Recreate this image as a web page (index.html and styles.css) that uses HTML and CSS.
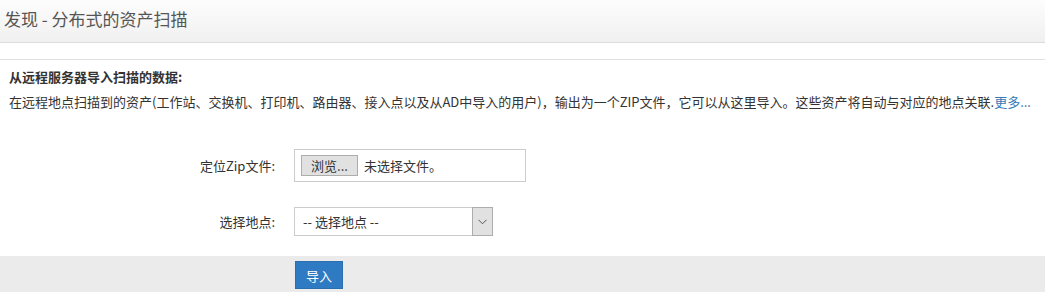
FILE: index.html
```html
<!DOCTYPE html>
<html>
<head>
  <meta charset="UTF-8">
  <meta name="viewport" content="width=device-width, initial-scale=1">
  <title>发现 - 分布式的资产扫描</title>
  <link rel="stylesheet" href="styles.css">
</head>
<body>
<div class="page-header">
  <h1>发现 - 分布式的资产扫描</h1>
</div>

<form id="import-form" action="/discovery/import" method="POST" enctype="multipart/form-data">
  <div class="intro">
    <h2>从远程服务器导入扫描的数据:</h2>
    <p>在远程地点扫描到的资产(工作站、交换机、打印机、路由器、接入点以及从AD中导入的用户)，输出为一个ZIP文件，它可以从这里导入。这些资产将自动与对应的地点关联.<a href="#">更多...</a></p>
  </div>

  <div class="form-row row-file">
    <label class="row-label" for="zip-file">定位Zip文件:</label>
    <label class="file-pick">
      <span class="file-btn">浏览...</span>
      <span class="file-name" id="file-name">未选择文件。</span>
      <input type="file" id="zip-file" name="zip-file" accept=".zip" onchange="showFileName(event)">
    </label>
  </div>

  <div class="form-row row-site">
    <label class="row-label" for="site">选择地点:</label>
    <div class="select-box">
      <select id="site" name="site">
        <option value="">-- 选择地点 --</option>
        <option value="hq">总部</option>
        <option value="branch">分公司</option>
      </select>
      <span class="select-arrow">
        <svg width="9" height="6" viewBox="0 0 9 6"><path d="M0.5 0.8 L4.5 4.8 L8.5 0.8" fill="none" stroke="#555" stroke-width="1"/></svg>
      </span>
    </div>
  </div>

  <div class="form-actions">
    <button type="submit">导入</button>
  </div>
</form>

<script>
  function showFileName(event) {
    const file = event.target.files[0];
    document.getElementById('file-name').textContent = file ? file.name : '未选择文件。';
  }
</script>
</body>
</html>
```

FILE: styles.css
```css
body {
  margin: 0;
  font-family: "Noto Sans CJK SC", "Noto Sans", sans-serif;
  font-size: 13px;
  color: #333;
  background: #fff;
}

.page-header {
  height: 42px;
  background: linear-gradient(to bottom, #fdfdfd, #f0f0f0);
  border-bottom: 1px solid #dcdcdc;
  margin-bottom: 16px;
}

.page-header h1 {
  margin: 0;
  padding-left: 4px;
  font-size: 17px;
  font-weight: normal;
  line-height: 38px;
  color: #555;
}

.intro {
  border-top: 1px solid #e0e0e0;
  padding: 7px 9px 0;
}

.intro h2 {
  margin: 0 0 5px;
  font-size: 13px;
  font-weight: bold;
  line-height: 20px;
}

.intro p {
  margin: 0;
  line-height: 20px;
  white-space: nowrap;
}

.intro a {
  color: #337ab7;
  text-decoration: none;
}

.form-row {
  display: grid;
  grid-template-columns: 275px auto;
  column-gap: 19px;
  align-items: center;
}

.row-file {
  margin-top: 37px;
}

.row-site {
  margin-top: 25px;
}

.row-label {
  text-align: right;
}

.file-pick {
  display: flex;
  align-items: center;
  width: 224px;
  height: 31px;
  border: 1px solid #ccc;
  padding-left: 6px;
  box-sizing: content-box;
  cursor: pointer;
}

.file-pick input {
  display: none;
}

.file-btn {
  display: inline-block;
  width: 55px;
  height: 19px;
  line-height: 19px;
  text-align: center;
  background: #e1e1e1;
  border: 1px solid #adadad;
}

.file-name {
  margin-left: 6px;
}

.select-box {
  display: flex;
  width: 197px;
  height: 27px;
  border: 1px solid #ccc;
}

.select-box select {
  flex: 1;
  appearance: none;
  -webkit-appearance: none;
  border: none;
  background: #fff;
  padding: 0 0 0 8px;
  font-family: inherit;
  font-size: 13px;
  color: #333;
  outline: none;
}

.select-arrow {
  display: flex;
  align-items: center;
  justify-content: center;
  width: 19px;
  background: #e1e1e1;
  border: 1px solid #adadad;
  margin: -1px -1px -1px 0;
}

.form-actions {
  margin-top: 20px;
  height: 36px;
  background: #ebebeb;
  padding: 5px 0 0 295px;
  box-sizing: border-box;
}

button {
  width: 48px;
  height: 28px;
  background-color: #2f7bc3;
  border: 1px solid #2a6ead;
  color: #fff;
  font-family: inherit;
  font-size: 13px;
  padding: 0;
  cursor: pointer;
}

button:hover {
  background-color: #286aa8;
}
```
